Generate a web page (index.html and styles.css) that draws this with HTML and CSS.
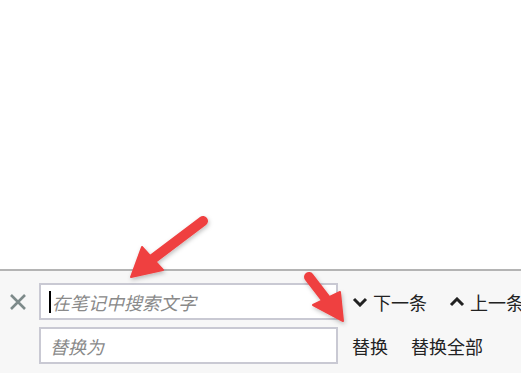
FILE: index.html
```html
<html lang="zh-CN">
<head>
  <meta charset="UTF-8" />
  <meta name="viewport" content="width=device-width, initial-scale=1.0">
  <title>查找替换</title>
  <link rel="stylesheet" href="styles.css">
</head>
<body>
  <div class="note-area"></div>

  <div class="findbar">
    <div class="close-cell">
      <svg class="close-icon" width="18" height="18" viewBox="0 0 18 18">
        <path d="M2 2 L16 16 M16 2 L2 16" stroke="#7d8a8a" stroke-width="2.6" fill="none"/>
      </svg>
    </div>
    <div class="field"><span class="caret"></span><span class="placeholder">在笔记中搜索文字</span></div>
    <div class="actions">
      <span class="action">
        <svg class="chev" width="16" height="10" viewBox="0 0 16 10"><polyline points="2,2 8,8 14,2" stroke="#222" stroke-width="3" fill="none"/></svg>下一条
      </span>
      <span class="action">
        <svg class="chev" width="16" height="10" viewBox="0 0 16 10"><polyline points="2,8 8,2 14,8" stroke="#222" stroke-width="3" fill="none"/></svg>上一条
      </span>
    </div>

    <div></div>
    <div class="field"><span class="placeholder">替换为</span></div>
    <div class="actions replace">
      <span class="action">替换</span>
      <span class="action">替换全部</span>
    </div>
  </div>

  <svg class="arrows" width="521" height="390" viewBox="0 0 521 390">
    <defs>
      <filter id="shadow" x="-20%" y="-20%" width="140%" height="140%">
        <feDropShadow dx="1" dy="2" stdDeviation="2" flood-color="#000" flood-opacity="0.25"/>
      </filter>
    </defs>
    <g fill="#ef4040" stroke="#ef4040" filter="url(#shadow)">
      <line x1="203" y1="221" x2="150" y2="261" stroke-width="10" stroke-linecap="round"/>
      <polygon points="131,277 142,247 163,270" stroke-width="2" stroke-linejoin="round"/>
      <line x1="309" y1="277" x2="329" y2="303" stroke-width="10" stroke-linecap="round"/>
      <polygon points="343,321 313,305 340,292" stroke-width="2" stroke-linejoin="round"/>
    </g>
  </svg>
</body>
</html>
```

FILE: styles.css
```css
body {
  margin: 0;
  background: #fff;
  font-family: "Noto Sans CJK SC", "Liberation Sans", sans-serif;
  overflow: hidden;
}
.note-area {
  height: 269px;
}
.findbar {
  border-top: 2px solid #b4b4b4;
  background: #f7f7f7;
  height: 90px;
  padding-top: 12px;
  display: grid;
  grid-template-columns: 39px 299px 1fr;
  grid-auto-rows: 37px;
  row-gap: 7px;
}
.close-cell {
  display: flex;
  align-items: center;
  padding-left: 9px;
}
.field {
  border: 2px solid #c9c9d3;
  background: #fff;
  display: flex;
  align-items: center;
  padding-left: 8px;
}
.caret {
  width: 2px;
  height: 22px;
  background: #000;
  margin-right: 0;
}
.placeholder {
  color: #8a8a8a;
  font-style: italic;
  font-size: 18px;
  padding-left: 1px;
}
.actions {
  display: flex;
  align-items: center;
  gap: 22px;
  padding-left: 14px;
  white-space: nowrap;
  color: #222;
  font-size: 18px;
}
.actions.replace {
  gap: 23px;
}
.action {
  display: flex;
  align-items: center;
}
.chev {
  margin-right: 5px;
}
.arrows {
  position: absolute;
  left: 0;
  top: 0;
  pointer-events: none;
}
```
